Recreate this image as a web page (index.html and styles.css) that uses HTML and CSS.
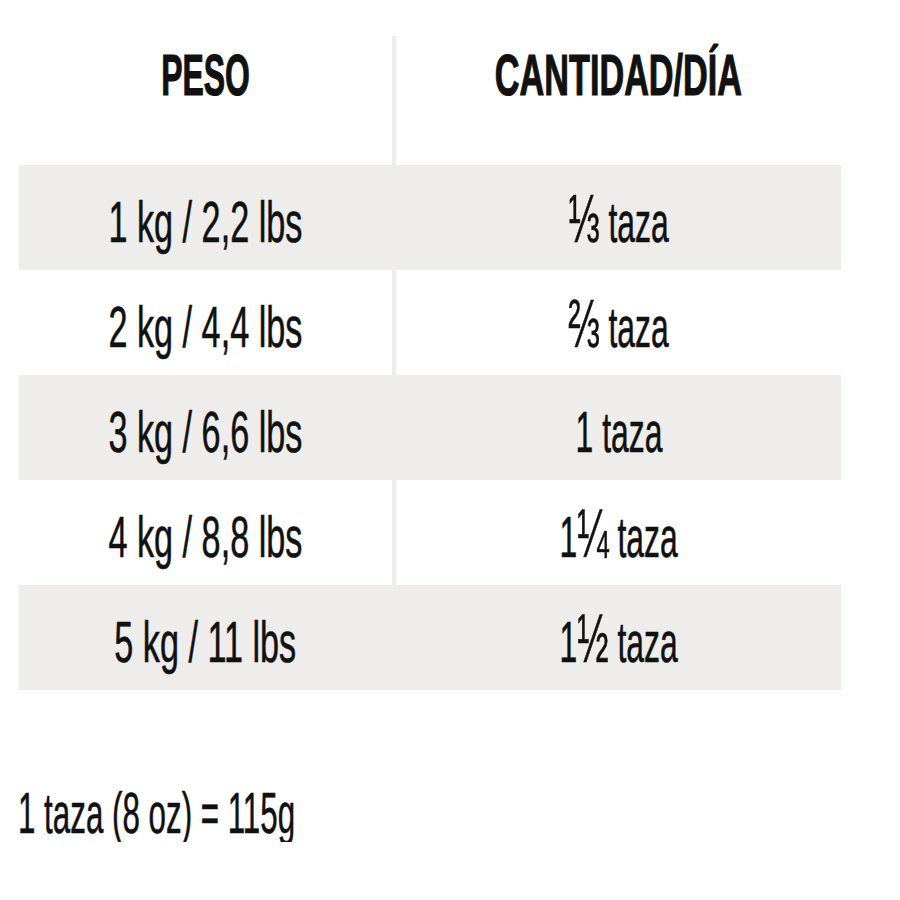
FILE: index.html
```html
<!DOCTYPE html>
<html lang="es">
<head>
<meta charset="utf-8">
<title>Tabla de alimentación</title>
<link rel="stylesheet" href="styles.css">
</head>
<body>
<main class="page">
  <div class="table">
    <div class="cell head col1"><span class="txt h-peso">PESO</span></div>
    <div class="cell head col2"><span class="txt h-cant">CANTIDAD/DÍA</span></div>

    <div class="cell row gray col1"><span class="txt c1">1 kg / 2,2 lbs</span></div>
    <div class="cell row gray col2"><span class="txt c2"><span class="frac">⅓</span> taza</span></div>

    <div class="cell row col1"><span class="txt c1">2 kg / 4,4 lbs</span></div>
    <div class="cell row col2"><span class="txt c2"><span class="frac">⅔</span> taza</span></div>

    <div class="cell row gray col1"><span class="txt c1">3 kg / 6,6 lbs</span></div>
    <div class="cell row gray col2"><span class="txt c2">1 taza</span></div>

    <div class="cell row col1"><span class="txt c1">4 kg / 8,8 lbs</span></div>
    <div class="cell row col2"><span class="txt c2">1<span class="frac">¼</span> taza</span></div>

    <div class="cell row gray col1"><span class="txt c1">5 kg / 11 lbs</span></div>
    <div class="cell row gray col2"><span class="txt c2">1<span class="frac">½</span> taza</span></div>
  </div>
  <p class="note"><span class="txt foot">1 taza (8 oz) = 115g</span></p>
</main>
</body>
</html>
```

FILE: styles.css
```css
html, body {
  margin: 0;
  padding: 0;
  background: #ffffff;
}

body {
  font-family: "Liberation Sans", Arial, sans-serif;
  color: #111111;
}

.page {
  padding: 36px 0 0 19px;
}

.table {
  display: grid;
  grid-template-columns: 373px 449px;
  width: 822px;
}

.cell {
  text-align: center;
  font-size: 58px;
  white-space: nowrap;
  overflow: visible;
}

.col2 {
  border-left: 4px solid #eeedeb;
}

.head {
  height: 129px;
  box-sizing: border-box;
  padding-top: 10px;
  line-height: 58px;
  font-weight: 700;
}

.row {
  height: 105px;
  box-sizing: border-box;
  padding-top: 8px;
  line-height: 97px;
}

.gray {
  background: #eeedeb;
}

.txt {
  display: inline-block;
  transform-origin: center;
  -webkit-text-stroke: 0.6px #111111;
}

.head .txt {
  -webkit-text-stroke: 1.2px #111111;
}

.frac {
  font-size: 1.18em;
  line-height: 0;
}

.h-peso { transform: scaleX(0.55); }
.h-cant { transform: scaleX(0.59); }
.c1 { transform: scaleX(0.59); }
.c2 { transform: scaleX(0.55); }

.note {
  margin: 94px 0 0 -1px;
  font-size: 58px;
  line-height: 58px;
  white-space: nowrap;
}

.foot {
  transform-origin: left center;
  transform: scaleX(0.54);
}
```
